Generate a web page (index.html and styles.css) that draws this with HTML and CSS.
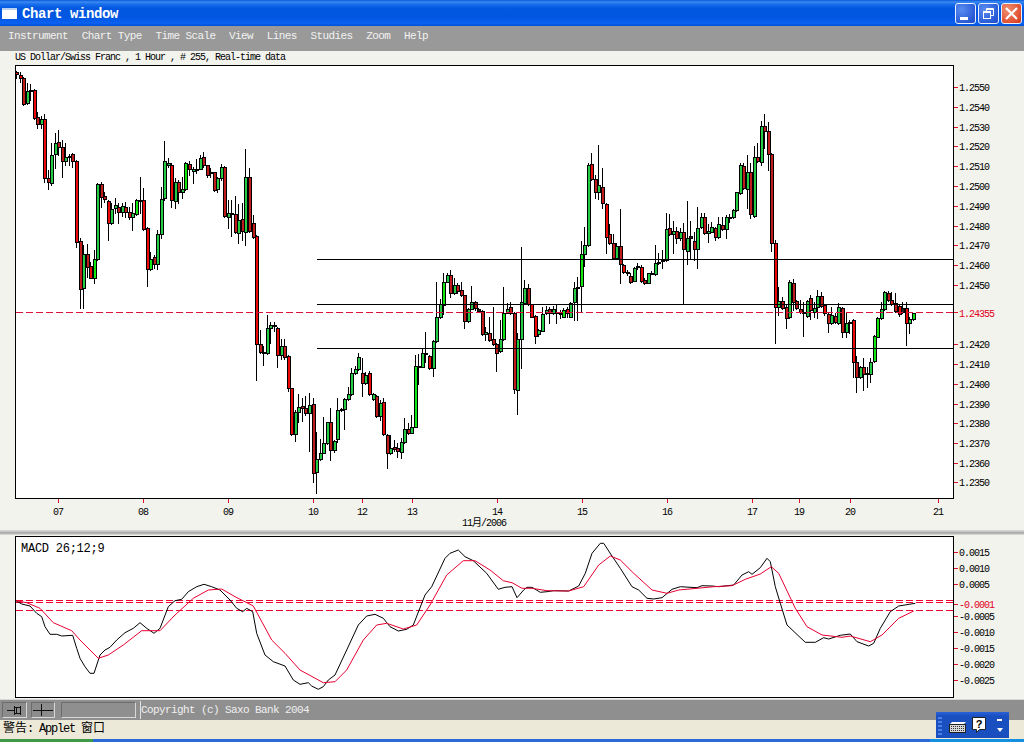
FILE: index.html
```html
<!DOCTYPE html>
<html lang="en">
<head>
<meta charset="utf-8">
<title>Chart window</title>
<link rel="stylesheet" href="styles.css">
</head>
<body>
<div class="window">
  <header class="titlebar">
    <span class="app-icon"></span>
    <span class="title">Chart window</span>
    <div class="win-buttons">
      <button class="win-btn"><svg width="21" height="21" viewBox="0 0 21 21"><rect x="5" y="14" width="8" height="3" fill="#fff"/></svg></button>
      <button class="win-btn"><svg width="21" height="21" viewBox="0 0 21 21" fill="none" stroke="#fff" stroke-width="1"><path d="M8.5 8V5.5h7v7H13"/><path d="M8.5 6.5h7" /><rect x="5.5" y="8.500" width="7" height="7"/><path d="M5.500 9.500h7"/></svg></button>
      <button class="win-btn close"><svg width="21" height="21" viewBox="0 0 21 21" stroke="#fff" stroke-width="2.200"><path d="M5 5l11 11M16 5L5 16"/></svg></button>
    </div>
  </header>
  <nav class="menubar">
    <span>Instrument</span><span>Chart Type</span><span>Time Scale</span><span>View</span><span>Lines</span><span>Studies</span><span>Zoom</span><span>Help</span>
  </nav>
  <div class="chart-title">US Dollar/Swiss Franc , 1 Hour , # 255, Real-time data</div>
  <svg class="price-chart" width="1024" height="465" viewBox="0 65 1024 465">
    <rect class="frame" x="15.500" y="65.500" width="938" height="433"/>
    <g id="candles"></g>
    <path class="hline" d="M317 259.500H953M317 304.500H953M317 348.500H953"/>
    <path class="dash-main" d="M16 312.500H953"/>
    <path class="tick" d="M954 87.500h4M954 107.500h4M954 127.500h4M954 146.500h4M954 166.500h4M954 186.500h4M954 206.500h4M954 226.500h4M954 245.500h4M954 265.500h4M954 285.500h4M954 312.500h4M954 344.500h4M954 364.500h4M954 384.500h4M954 404.500h4M954 423.500h4M954 443.500h4M954 463.500h4M954 482.500h4"/>
    <path class="tick" d="M58.500 499v4M143.500 499v4M228.500 499v4M313.500 499v4M362.500 499v4M412.500 499v4M497.500 499v4M582.500 499v4M667.500 499v4M752.500 499v4M799.500 499v4M850.500 499v4M938.500 499v4"/>
    <g class="axis">
      <text x="959" y="91">1.2550</text><text x="959" y="111">1.2540</text><text x="959" y="131">1.2530</text><text x="959" y="150">1.2520</text><text x="959" y="170">1.2510</text><text x="959" y="190">1.2500</text><text x="959" y="210">1.2490</text><text x="959" y="230">1.2480</text><text x="959" y="249">1.2470</text><text x="959" y="269">1.2460</text><text x="959" y="289">1.2450</text>
      <text class="axis-red" x="959" y="317">1.24355</text>
      <text x="959" y="348">1.2420</text><text x="959" y="368">1.2410</text><text x="959" y="388">1.2400</text><text x="959" y="408">1.2390</text><text x="959" y="427">1.2380</text><text x="959" y="447">1.2370</text><text x="959" y="467">1.2360</text><text x="959" y="486">1.2350</text>
    </g>
    <g class="axis">
      <text x="53" y="515">07</text><text x="138" y="515">08</text><text x="223" y="515">09</text><text x="308" y="515">10</text><text x="357" y="515">12</text><text x="407" y="515">13</text><text x="492" y="515">14</text><text x="577" y="515">15</text><text x="662" y="515">16</text><text x="747" y="515">17</text><text x="794" y="515">19</text><text x="845" y="515">20</text><text x="933" y="515">21</text>
      <text x="462" y="526">11月/2006</text>
    </g>
  </svg>
  <div class="splitter"></div>
  <svg class="macd-chart" width="1024" height="164" viewBox="0 536 1024 164">
    <rect class="frame" x="15.500" y="536.500" width="938" height="161"/>
    <text class="macd-name" x="21" y="552">MACD 26;12;9</text>
    <path class="dash-macd" d="M16 600.500H953M16 602.500H953M16 610.500H953"/>
    <polyline id="macd-black" class="line-black" points=""/>
    <polyline id="macd-red" class="line-red" points=""/>
    <path class="tick" d="M954 552.500h4M954 568.500h4M954 584.500h4M954 604.500h4M954 616.500h4M954 632.500h4M954 648.500h4M954 664.500h4M954 680.500h4"/>
    <g class="axis">
      <text x="959" y="556">0.0015</text><text x="959" y="572">0.0010</text><text x="959" y="588">0.0005</text>
      <text class="axis-red" x="959" y="608">-0.0001</text>
      <text x="959" y="620">-0.0005</text><text x="959" y="636">-0.0010</text><text x="959" y="652">-0.0015</text><text x="959" y="668">-0.0020</text><text x="959" y="684">-0.0025</text>
    </g>
  </svg>
  <div class="toolbar">
    <button class="tool-btn"><svg width="16" height="12" viewBox="0 0 16 12" fill="none" stroke="#111"><path d="M0 6.500h7M7.500 2v9M7.500 3.500h6v6h-6M13.500 2v9M9.500 3.500v6"/></svg></button>
    <button class="tool-btn"><svg width="22" height="12" viewBox="0 0 22 12" stroke="#111"><path d="M1 6.500h20M9.500 0v12"/></svg></button>
    <div class="tool-blank"></div>
    <div class="copyright">Copyright (c) Saxo Bank 2004</div>
  </div>
  <div class="statusbar"><span class="cjk">警告</span>: Applet <span class="cjk">窗口</span></div>
  <div class="taskbar"><div class="start"></div><div class="task-mid"></div><div class="task-tray"></div></div>
</div>
<div class="ime-tray">
  <span class="ime-grip"></span>
  <svg class="ime-key" width="17" height="11" viewBox="0 0 17 11"><path d="M3 0h14l-2 2H1z" fill="#fff"/><rect x="0.500" y="2.500" width="16" height="8" fill="#d8d8d8" stroke="#222"/><path d="M2 4.500h13M2 6.500h13M2 8.500h13" stroke="#333" stroke-dasharray="1 1"/></svg>
  <svg class="ime-help" width="14" height="16" viewBox="0 0 14 16"><path d="M.5.500h13v12h-6l-3 3v-3h-4z" fill="#fff" stroke="#222"/><text class="help-mark" x="7" y="11">?</text></svg>
  <span class="ime-arrows"><i class="ime-bar"></i><i class="ime-down"></i></span>
</div>
<script src="chart.js"></script>
</body>
</html>
```
FILE: styles.css
```css
* { box-sizing: border-box; }
html, body { margin: 0; padding: 0; }
body {
  width: 1024px;
  height: 742px;
  overflow: hidden;
  background: #f3f3ee;
  position: relative;
  font-family: "Liberation Mono", "Noto Sans CJK SC", monospace;
}
.window { display: flex; flex-direction: column; height: 742px; }
.titlebar {
  height: 26px;
  display: flex;
  align-items: center;
  padding: 0 2px 0 2px;
  background: linear-gradient(180deg, #0a58d8 0, #3a8cf4 2px, #1c6eec 4px, #0258e0 8px, #0256e2 18px, #0a62f2 23px, #0450d8 26px);
}
.app-icon {
  width: 15px;
  height: 11px;
  margin-top: 1px;
  background: linear-gradient(180deg, #bcd0f0 0 2px, #fff 2px);
}
.title {
  margin-left: 5px;
  padding-top: 2px;
  color: #fff;
  font-size: 14px;
  font-weight: bold;
  letter-spacing: -0.4px;
}
.win-buttons { margin-left: auto; display: flex; gap: 2px; }
.win-btn {
  width: 21px;
  height: 21px;
  padding: 0;
  border: 1px solid #e8f0ff;
  border-radius: 3px;
  background: radial-gradient(circle at 30% 30%, #5a8cf0, #2a5cd8 70%, #2048c0);
  display: block;
}
.win-btn svg { display: block; margin: -1px; }
.close { background: radial-gradient(circle at 30% 30%, #f09070, #e05030 70%, #c83818); }
.menubar {
  height: 25px;
  display: flex;
  align-items: center;
  gap: 13.7px;
  padding: 0 0 6px 8px;
  background: #999999;
  color: #f2f2f2;
  font-size: 11px;
  letter-spacing: -0.6px;
}
.chart-title {
  height: 14px;
  padding-left: 15px;
  font-size: 10px;
  line-height: 13px;
  letter-spacing: -1px;
  color: #000;
}
svg { display: block; }
.price-chart, .macd-chart { flex: none; }
.frame { fill: #fff; stroke: #000; stroke-width: 1; shape-rendering: crispEdges; }
.hline { stroke: #000; stroke-width: 1; fill: none; }
.dash-main { stroke: #e0103c; stroke-width: 1; stroke-dasharray: 7 3; fill: none; }
.dash-macd { stroke: #f00030; stroke-width: 1; stroke-dasharray: 7 3; fill: none; }
.tick { stroke: #e01030; stroke-width: 1; fill: none; }
.axis text { font-size: 10px; letter-spacing: -1px; fill: #000; }
.axis .axis-red { fill: #e00020; }
.macd-name { font-size: 12px; letter-spacing: -0.25px; fill: #000; }
.line-black { fill: none; stroke: #000; stroke-width: 1; }
.line-red { fill: none; stroke: #e80030; stroke-width: 1; }
.splitter {
  height: 6px;
  background: linear-gradient(180deg, #c4c4c4 0, #e6e6e6 1px, #a8a8a8 2px, #b8b8b8 4px, #f3f3ee 5px);
}
.toolbar {
  height: 21px;
  margin-top: -1px;
  display: flex;
  align-items: center;
  gap: 4px;
  padding-left: 2px;
  background: #8f8f8f;
  border-top: 1px solid #d8d8d8;
}
.tool-btn {
  width: 25px;
  height: 16px;
  padding: 0;
  display: flex;
  align-items: center;
  justify-content: center;
  background: #8c8c8c;
  border: 1px solid #d8d8d8;
  border-color: #6c6c6c #d8d8d8 #d8d8d8 #6c6c6c;
}
.tool-btn + .tool-btn { width: 24px; }
.tool-blank {
  width: 75px;
  height: 16px;
  margin-left: 2px;
  border: 1px solid #d8d8d8;
  border-color: #6c6c6c #d8d8d8 #d8d8d8 #6c6c6c;
}
.copyright {
  flex: 1;
  height: 18px;
  font-size: 11px;
  line-height: 18px;
  letter-spacing: -0.6px;
  color: #f0f0f0;
  border-left: 1px solid #e0e0e0;
}
.statusbar {
  height: 19px;
  padding-left: 3px;
  background: #ece9d8;
  color: #000;
  font-size: 12px;
  line-height: 18px;
  letter-spacing: -1.2px;
}
.cjk { letter-spacing: 0; }
.taskbar { flex: 1; display: flex; }
.start { width: 93px; background: #3f9a48; }
.task-mid { width: 837px; background: #2a6ad8; }
.task-tray { flex: 1; background: #1590e0; }
.ime-tray {
  position: absolute;
  left: 936px;
  top: 712px;
  width: 73px;
  height: 26px;
  background: #1a4fc0;
  background-image: linear-gradient(180deg, #2a62d8 0, #1a4fc0 4px);
}
.ime-grip {
  position: absolute;
  left: 2px;
  top: 5px;
  width: 4px;
  height: 18px;
  background: repeating-linear-gradient(180deg, #4c80e8 0 2px, transparent 2px 4px);
}
.ime-key { position: absolute; left: 13px; top: 10px; }
.ime-help { position: absolute; left: 36px; top: 5px; }
.help-mark { font: bold 11px "Liberation Sans", sans-serif; text-anchor: middle; fill: #000; }
.ime-arrows { position: absolute; left: 61px; top: 7px; width: 6px; height: 14px; }
.ime-bar { position: absolute; left: 0; top: 0; width: 5px; height: 2px; background: #fff; }
.ime-down {
  position: absolute;
  left: 0;
  top: 9px;
  width: 0;
  height: 0;
  border: 3px solid transparent;
  border-top: 4px solid #fff;
  border-bottom: 0;
}
```
FILE: chart.js
```js
// Candle rows: body top, body bottom, colour, wick top, wick bottom.
// Values are 3x coordinates relative to each segment's y origin.
var segments = [
  { y: 60, rows: `35 43 R 33 55,46 54 R 35 65,55 133 r 52 135,92 130 g 68 132,89 93 g 72 120,91 175 R 88 178,172 193 r 155 205,176 192 g 168 205,178 355 R 162 365,355 367 r 330 388,
286 370 g 250 375,250 283 g 220 325,247 262 r 210 285,260 304 r 240 350,290 304 g 250 315,287 290 g 282 315,283 303 r 278 320,304 545 R 300 560,544 688 r 535 745,583 685 g 555 745,
583 620 r 552 650,618 653 R 605 655,598 655 G 570 668,372 598 g 368 600,372 410 r 365 440,408 418 r 395 425,424 488 R 420 540,448 490 g 430 492,436 445 g 415 458,440 455 r 430 488,
438 455 g 430 468,442 455 r 425 470,455 472 r 440 478,460 472 g 430 510,421 463 G 418 466,420 421 k 350 458,421 508 R 385 510,505 628 R 500 678,596 628 G 575 630,592 612 r 585 625,
523 613 g 510 628,418 523 g 380 535,304 415 g 243 420,308 315 g 295 320,314 420 R 310 442,365 422 g 355 443,365 397 r 360 428,388 395 g 352 415,310 388 G 305 390,313 328 r 303 345,
326 333 g 320 368,326 328 k 298 340,293 326 g 285 328,290 315 r 277 320,316 346 r 315 350,337 340 k 325 350,337 390 r 335 393,355 388 g 350 395,320 355 g 312 360,320 468 r 318 470,
458 470 g 420 503,458 460 k 420 527,463 517 r 408 520,481 520 g 432 548,478 513 r 428 540,352 515 g 268 554,352 512 r 325 515,490 532 r 465 535,529 852 R 525 960` },
  { y: 300, rows: `133 155 r 90 158,155 160 g 138 195,85 160 g 45 162,76 85 g 65 128,76 78 k 65 92,85 166 R 82 200,138 164 g 118 176,137 172 r 118 178,168 263 R 165 272,265 402 R 263 405,
337 403 g 330 422,320 337 g 282 365,317 323 r 295 362,323 340 r 288 345,316 338 g 278 452,313 520 r 295 545,478 517 g 395 580,458 478 g 418 480,428 458 g 350 460,367 430 g 365 432,
367 450 r 325 480,422 451 g 420 455,330 418 g 295 425,328 331 k 325 332,298 328 g 295 387,283 298 g 262 300,220 283 g 205 285,208 220 g 198 222,172 208 g 160 210,220 250 r 175 288,
226 250 g 215 252,218 283 R 212 285,282 296 g 280 300,288 348 r 285 350,310 349 g 300 360,307 403 R 295 405,405 458 r 402 503,443 460 g 405 462,440 448 r 420 452,445 452 r 430 472,
425 455 g 415 473,388 427 g 355 430,388 400 r 370 402,380 398 g 345 400,198 380 G 165 382` },
  { y: 110, rows: `768 770 k 732 822,730 770 g 715 772,730 733 k 665 755,738 775 R 735 778,693 775 g 690 797,622 693 g 515 695,583 622 g 568 625,515 585 G 490 612,495 515 g 488 517,495 550 r 480 562,
525 550 g 505 552,525 543 r 518 550,540 555 r 517 558,555 632 r 555 653,596 632 g 595 635,577 596 g 527 598,575 595 r 572 600,597 603 k 595 605,603 673 r 600 675,665 673 g 650 690,
668 690 r 622 692,688 702 r 590 705,702 728 r 700 782,688 723 g 630 725,608 688 G 530 690,596 608 g 578 610,592 610 r 575 612,608 838 r 605 848,688 840 g 670 913,575 688 g 410 773,
535 580 g 510 582,535 582 r 522 585,583 620 R 582 622,618 677 R 615 700,660 673 g 658 677,612 662 g 590 664,600 610 g 588 612,598 608 r 590 640,598 610 g 588 612,606 610 r 585 640,
608 612 r 600 625,600 620 G 595 622,598 610 R 590 622,578 620 g 575 622,535 575 g 515 630,530 532 k 500 630,433 528 G 392 605,405 433 g 350 468,165 405 g 160 408,163 208 R 130 210,
208 245 r 196 265,226 245 g 105 268,230 280 r 175 295,282 380 R 280 430,373 400 r 343 402,400 443 r 372 445,408 443 g 400 445,408 463 r 297 520,465 485 R 462 488,487 490 k 480 495,
497 515 r 490 518,475 512 g 470 514,468 472 k 460 478,470 512 R 466 515,510 520 r 505 523,490 518 g 488 520,488 490 k 482 492,458 493 g 405 495,455 460 k 430 462,450 452 k 420 475,
358 450 g 310 453,355 373 r 312 375,362 373 g 333 428,362 385 r 350 398` },
  { y: 100, rows: `397 415 g 385 420,397 448 r 368 612,415 453 g 303 493,408 415 k 362 478,423 448 r 395 480,385 448 g 322 503,352 382 g 338 385,350 400 r 340 402,393 400 g 373 425,380 395 g 365 397,
385 412 r 380 420,373 412 g 350 415,375 387 r 350 390,352 388 g 345 415,350 353 k 342 365,330 352 g 328 354,277 330 g 275 332,196 280 g 190 283,198 265 r 190 268,215 268 g 165 325,
215 343 r 190 355,170 347 g 138 350,170 182 r 130 185,77 185 g 63 195,77 92 r 42 145,92 163 r 65 210,163 430 r 160 452,430 620 R 420 730,602 622 g 560 645,602 625 r 590 627,
620 655 r 615 683,547 652 g 540 655,550 605 r 538 630,603 625 r 600 628,626 637 r 600 640,635 640 k 605 707,603 648 g 600 650,595 630 r 585 658,625 635 g 605 650,587 620 g 570 655,
587 617 r 575 620,615 640 R 612 645,642 670 r 640 695,645 670 g 620 672,648 667 r 640 670,622 670 g 610 672,625 697 r 620 710,670 697 g 640 710,665 670 g 660 700,660 787 R 658 832,
787 830 r 768 875,800 832 g 798 835,800 822 r 775 870,820 823 k 800 860,785 822 g 775 845,708 782 G 705 785,655 710 G 650 712,627 655 g 605 658,577 628 g 572 630,580 600 r 572 602,
600 612 r 575 615,608 632 r 580 635,618 643 R 612 648,625 637 k 605 640,625 670 R 605 735,656 668 g 650 698,640 658 G 638 660` }
];

var fills = { G: "#10e810", g: "#24cc44", R: "#ee0808", r: "#c01c1c", k: "#222222" };
var NS = "http://www.w3.org/2000/svg";

function add(parent, tag, attrs) {
  var el = document.createElementNS(NS, tag);
  for (var k in attrs) el.setAttribute(k, attrs[k]);
  parent.appendChild(el);
}

var group = document.getElementById("candles");
group.setAttribute("shape-rendering", "crispEdges");
var index = 0;
segments.forEach(function (seg) {
  seg.rows.replace(/\s*\n\s*/g, "").split(",").forEach(function (row) {
    var p = row.trim().split(/\s+/);
    var y = function (v) { return Math.round(seg.y + Number(v) / 3); };
    var x = Math.round(17 + 3.53 * index);
    add(group, "rect", { x: x - 1, y: y(p[3]), width: 1, height: y(p[4]) - y(p[3]) + 1, fill: "#000" });
    add(group, "rect", { x: x - 1.5, y: y(p[0]) + 0.5, width: 3, height: Math.max(1, y(p[1]) - y(p[0])), fill: fills[p[2]], stroke: "#000" });
    index++;
  });
});

function points(list, x0) {
  return list.map(function (p) {
    return (x0 + p[0] / 3).toFixed(1) + "," + (530 + p[1] / 3).toFixed(1);
  }).join(" ");
}

var blackA = [[48,212],[65,222],[90,228],[110,250],[125,260],[135,290],[150,313],[170,313],[185,318],[218,316],[230,355],[240,385],[255,410],[270,430],[282,430],[300,375],[315,360],[330,352],[350,330],[375,308],[400,295],[420,278],[440,295],[462,310],[480,295],[505,230],[525,212],[545,208],[565,185],[590,170],[612,163],[635,170],[660,180],[690,210],[710,235],[728,245],[740,235],[758,245],[770,310],[795,375],[820,395],[855,408],[880,450],[900,463],[925,458],[935,468],[955,478],[970,470],[985,450],[1005,435],[1040,360],[1075,285],[1100,258],[1125,253],[1150,265],[1170,290],[1195,303],[1220,298],[1240,285],[1275,195],[1295,170],[1335,85],[1350,70],[1375,60],[1395,80],[1420,92],[1460,130],[1495,178],[1515,172],[1536,170]];
var blackB = [[15,203],[35,180],[45,172],[60,172],[85,187],[105,185],[125,182],[170,183],[200,168],[220,130],[240,70],[265,40],[275,40],[300,78],[325,115],[360,170],[380,180],[405,205],[425,207],[450,203],[480,178],[505,170],[555,173],[570,167],[600,168],[620,170],[665,165],[690,135],[710,125],[720,133],[745,113],[765,85],[775,95],[790,170],[805,220],[825,285],[880,337],[910,337],[935,323],[950,327],[985,316],[1015,312],[1035,335],[1070,348],[1085,340],[1105,295],[1135,245],[1160,228],[1210,220]];
var redA = [[48,212],[80,218],[120,235],[160,278],[215,302],[240,330],[295,385],[325,375],[370,345],[425,302],[480,302],[525,255],[580,205],[625,180],[665,177],[705,200],[760,228],[815,330],[855,370],[900,420],[970,458],[1005,455],[1040,420],[1090,330],[1130,285],[1160,280],[1210,297],[1250,285],[1290,225],[1340,135],[1390,92],[1425,92],[1470,120],[1510,152],[1536,158]];
var redB = [[30,175],[60,175],[105,182],[170,183],[215,170],[260,105],[295,78],[325,90],[365,130],[420,180],[465,190],[500,180],[555,175],[605,170],[660,167],[700,148],[745,132],[778,110],[800,130],[850,235],[885,290],[930,315],[990,322],[1015,318],[1075,335],[1110,315],[1160,265],[1205,243]];

document.getElementById("macd-black").setAttribute("points", points(blackA, 0) + " " + points(blackB, 512));
document.getElementById("macd-red").setAttribute("points", points(redA, 0) + " " + points(redB, 512));
```
